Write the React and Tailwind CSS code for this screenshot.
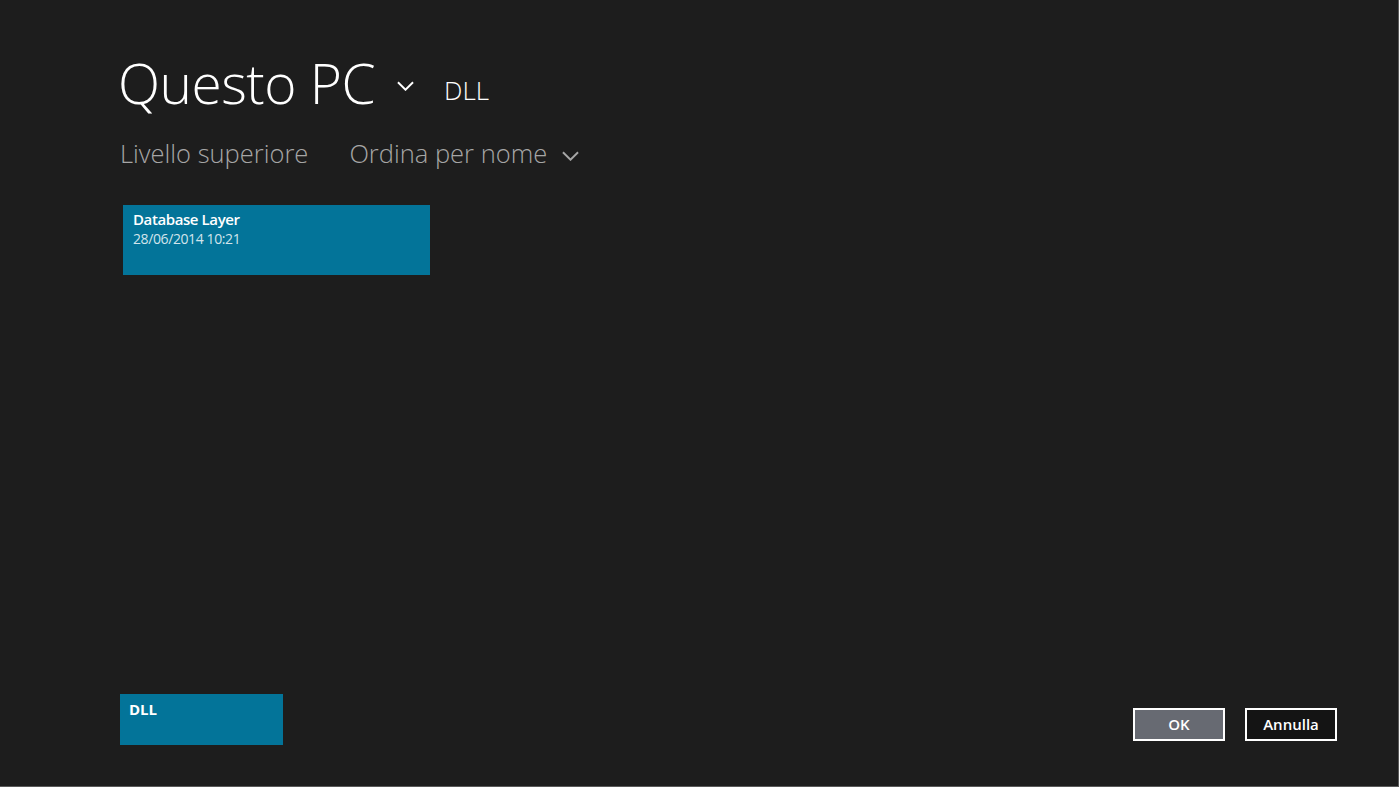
import React from 'react';

const Chevron = ({ className }) => (
  <svg viewBox="0 0 18 10" className={className} fill="none" stroke="currentColor" strokeWidth="2">
    <path d="M1 1l8 8 8-8" />
  </svg>
);

const App = () => {
  return (
    <div
      className="w-[1399px] h-[787px] bg-[#1d1d1d] border-r border-b border-[#5a5a5a] flex flex-col text-white overflow-hidden"
      style={{ fontFamily: '"Open Sans", "Noto Sans", sans-serif' }}
    >
      {/* header */}
      <div className="flex items-end pl-[118px] h-[110px]">
        <h1 className="text-[55px] font-light leading-none tracking-[-0.5px] text-white">Questo PC</h1>
        <Chevron className="w-[17px] h-[10px] ml-[22px] mb-[19px] text-white" />
        <span className="ml-[30px] mb-[7px] text-[26px] font-light leading-none">DLL</span>
      </div>

      {/* toolbar */}
      <div className="flex items-center pl-[120px] mt-[31px] text-[25.5px] font-light text-[#a6a6a6] leading-none">
        <span>Livello superiore</span>
        <span className="ml-[41px]">Ordina per nome</span>
        <Chevron className="w-[17px] h-[10px] ml-[15px] mt-[4px]" />
      </div>

      {/* files */}
      <div className="pl-[123px] mt-[38px]">
        <div className="w-[307px] h-[70px] bg-[#037499] px-[10px] pt-[4px]">
          <div className="text-[15px] font-semibold leading-[20px] tracking-[-0.4px]">Database Layer</div>
          <div className="text-[14px] leading-[20px] text-[#d2e4ec] tracking-[-0.4px]">28/06/2014 10:21</div>
        </div>
      </div>

      <div className="flex-1" />

      {/* footer */}
      <div className="flex items-start justify-between pl-[120px] pr-[61px] pb-[41px]">
        <div className="w-[163px] h-[51px] bg-[#037499] px-[9px] pt-[4px]">
          <div className="text-[15px] font-bold leading-[22px]">DLL</div>
        </div>
        <div className="flex gap-[20px] mt-[14px]">
          <button className="w-[92px] h-[33px] border-2 border-white bg-[#676a72] text-[15px] font-semibold">OK</button>
          <button className="w-[92px] h-[33px] border-2 border-white bg-[#141414] text-[15px] font-semibold">Annulla</button>
        </div>
      </div>
    </div>
  );
};

export default App;
